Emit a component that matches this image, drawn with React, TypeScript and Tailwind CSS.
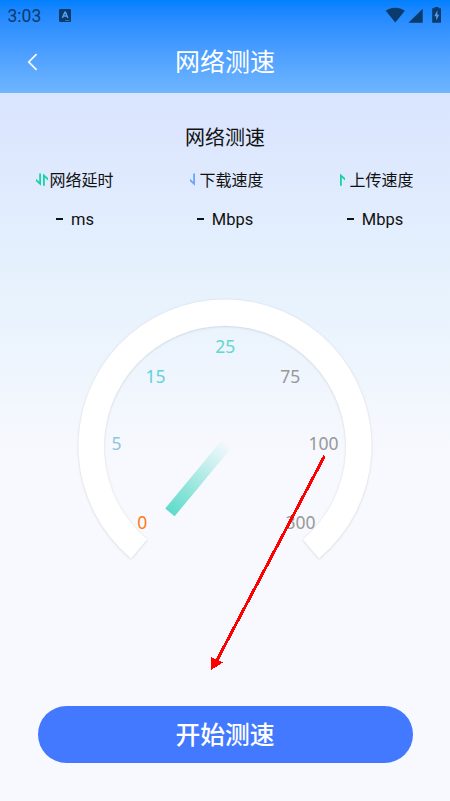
import React from "react";

interface Metric {
  label: string;
  unit: string;
  icon: React.ReactNode;
}

const DownMark = ({ color }: { color: string }) => (
  <svg className="w-[5px] h-[13px]" viewBox="0 0 5 13">
    <path d="M3.2 0.5H5V12.8L0 8.2V5.8L3.2 8.8Z" fill={color} />
  </svg>
);

const UpMark = ({ color }: { color: string }) => (
  <svg className="w-[5px] h-[13px]" viewBox="0 0 5 13">
    <path d="M1.8 12.8H0V0.5L5 5V7.4L1.8 4.4Z" fill={color} />
  </svg>
);

const metrics: Metric[] = [
  {
    label: "网络延时",
    unit: "ms",
    icon: (
      <span className="mr-[1px] flex gap-[2px] pb-[3px]">
        <DownMark color="#1ad0a5" />
        <UpMark color="#1ad0a5" />
      </span>
    ),
  },
  {
    label: "下载速度",
    unit: "Mbps",
    icon: (
      <span className="mr-[4px] flex pb-[3px]">
        <DownMark color="#6ba4ff" />
      </span>
    ),
  },
  {
    label: "上传速度",
    unit: "Mbps",
    icon: (
      <span className="mr-[4px] flex pb-[3px]">
        <UpMark color="#1ad0a5" />
      </span>
    ),
  },
];

const ticks = [
  { value: "0", x: 142.3, y: 529, color: "#ff7a14" },
  { value: "5", x: 116.6, y: 450, color: "#8bc8d8" },
  { value: "15", x: 155.6, y: 383, color: "#60d3da" },
  { value: "25", x: 225.2, y: 352.5, color: "#64d6cf" },
  { value: "75", x: 290.3, y: 383, color: "#98989b" },
  { value: "100", x: 323.5, y: 450, color: "#98989b" },
  { value: "300", x: 300.5, y: 529, color: "#98989b" },
];

function StatusBar() {
  return (
    <div className="flex h-8 items-center justify-between pl-[7.5px] pr-[8px] text-[#0b3a6c]">
      <div className="flex items-center">
        <span className="w-[51px] text-[17.5px] leading-8">3:03</span>
        <svg className="-mt-[2px] h-[13px] w-[12px]" viewBox="0 0 12 13">
          <rect width="12" height="13" rx="1.3" fill="#0b3a6c" />
          <path d="M3.4 9L5.8 3.2H6.5L8.8 9M4.2 7H8" stroke="#4fa2f8" strokeWidth="1.5" fill="none" />
          <path d="M6 11.5H10.5" stroke="#3c79b5" strokeWidth="0.8" />
        </svg>
      </div>
      <svg className="h-[18px] w-[57px]" viewBox="0 0 57 18">
        <path d="M0.7 3.8C6.2-0.3 14.2-0.3 19.8 3.8L10.3 15.5Z" fill="#0b3a6c" />
        <path d="M23.5 15.7H37.7V1.7Z" fill="#0b3a6c" />
        <path d="M49.6 0H53.6V1.2H56V15.7H47.2V1.2H49.6Z" fill="#0b3a6c" />
        <path d="M52.4 3.3L49.2 9.2H51.2V13.5L54.3 7.7H52.4Z" fill="#4b9cf2" />
      </svg>
    </div>
  );
}

function Gauge() {
  return (
    <svg className="h-[424px] w-[450px]" viewBox="0 260 450 424">
      <defs>
        <linearGradient id="needle" gradientUnits="userSpaceOnUse" x1="169.9" y1="512.4" x2="227.3" y2="442.5">
          <stop offset="0" stopColor="#5fdbca" />
          <stop offset="1" stopColor="#5fdbca" stopOpacity="0" />
        </linearGradient>
        <filter id="rim" x="-5%" y="-5%" width="110%" height="110%">
          <feDropShadow dx="0" dy="0.5" stdDeviation="0.9" floodColor="#8c8c8c" floodOpacity="0.4" />
        </filter>
      </defs>
      <path
        d="M131 558.4A146.5 146.5 0 1 1 319 558.4L302.9 539.4A121 121 0 1 0 147.1 539.4Z"
        fill="#fff"
        filter="url(#rim)"
      />
      {ticks.map((tick) => (
        <text
          key={tick.value}
          x={tick.x}
          y={tick.y}
          fill={tick.color}
          textAnchor="middle"
          className="font-['Noto_Sans',sans-serif] text-[17.5px]"
        >
          {tick.value}
        </text>
      ))}
      <path d="M165.2 508.5L174.6 516.3L232.5 446.5L223.2 438.5Z" fill="url(#needle)" />
      <g fill="red" shapeRendering="crispEdges">
        <path d="M324.5 456L216 662" stroke="red" strokeWidth="3" />
        <path d="M211 657L223 662.5L211 670Z" />
      </g>
    </svg>
  );
}

function App() {
  return (
    <div className="flex h-[801px] w-[450px] flex-col overflow-hidden bg-[#f8f9fe] font-['Roboto','Noto_Sans_CJK_SC',sans-serif]">
      <header className="h-[93px] shrink-0 bg-linear-to-b from-[#0080ff] to-[#6fb5ff]">
        <StatusBar />
        <div className="grid h-[61px] grid-cols-[60px_1fr_60px] items-center text-white">
          <svg className="-mt-[2px] ml-[27px] h-[18px] w-[11px]" viewBox="0 0 11 18" fill="none">
            <path d="M9.6 1.2L1.8 9L9.6 16.8" stroke="#fff" strokeWidth="1.7" />
          </svg>
          <h1 className="pt-px text-center text-[25px] leading-[60px]">网络测速</h1>
        </div>
      </header>

      <main className="flex flex-1 flex-col bg-linear-to-b from-[#d9e4ff] via-[#e7f2fd] via-28% to-[#f8f9fe] to-52%">
        <h2 className="mt-[29px] text-center text-[20px] leading-8 text-[#111]">网络测速</h2>
        <div className="mt-[15px] grid grid-cols-3 text-[#111]">
          {metrics.map((metric) => (
            <div key={metric.label} className="flex flex-col">
              <div className="flex h-6 items-center justify-end pr-[36.6px] text-[16px] leading-6">
                {metric.icon}
                {metric.label}
              </div>
              <div className="mt-[13px] flex h-7 items-center justify-center text-[16.5px] leading-7">
                <span className="mr-[8px] h-[2px] w-[7px] -translate-y-px bg-[#111]" />
                {metric.unit}
              </div>
            </div>
          ))}
        </div>
        <div className="mt-[26px]">
          <Gauge />
        </div>
        <button className="mx-auto mt-[22px] h-[57px] w-[375px] rounded-full bg-[#4379ff] pt-px text-[24.8px] leading-[57px] font-medium text-white">
          开始测速
        </button>
      </main>
    </div>
  );
}

export default App;
